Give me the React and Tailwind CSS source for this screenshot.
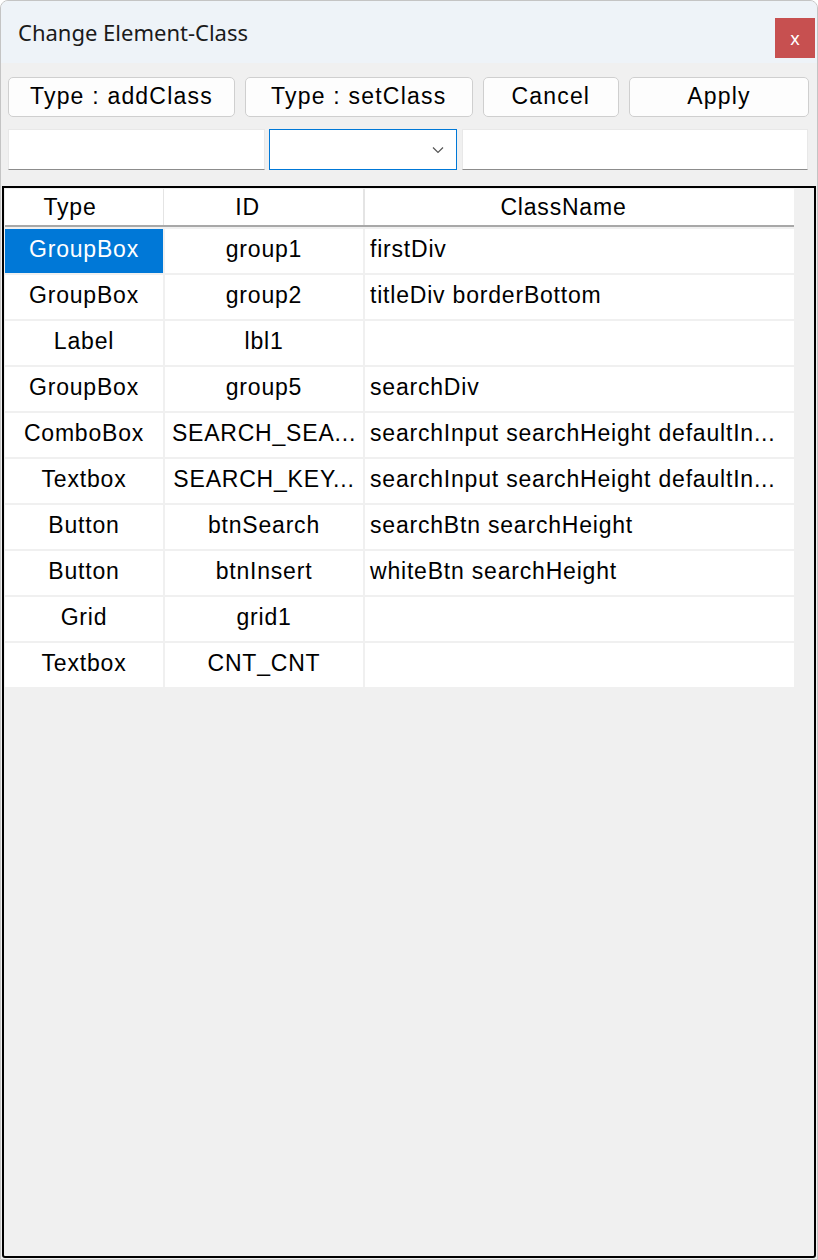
const rows = [
    { type: "GroupBox", id: "group1", cls: "firstDiv", selected: true },
    { type: "GroupBox", id: "group2", cls: "titleDiv borderBottom" },
    { type: "Label", id: "lbl1", cls: "" },
    { type: "GroupBox", id: "group5", cls: "searchDiv" },
    { type: "ComboBox", id: "SEARCH_SEA...", cls: "searchInput searchHeight defaultIn..." },
    { type: "Textbox", id: "SEARCH_KEY...", cls: "searchInput searchHeight defaultIn..." },
    { type: "Button", id: "btnSearch", cls: "searchBtn searchHeight" },
    { type: "Button", id: "btnInsert", cls: "whiteBtn searchHeight" },
    { type: "Grid", id: "grid1", cls: "" },
    { type: "Textbox", id: "CNT_CNT", cls: "" },
];

const gridFont = { fontFamily: '"Liberation Sans", Arial, sans-serif' };

function ToolButton({ label, className }) {
    return (
        <button
            className={`h-[40px] rounded-[5px] border border-[#cfcfcf] bg-[#fdfdfd] text-[23px] tracking-[1.2px] text-black leading-none pb-[2px] ${className}`}
            style={gridFont}
        >
            {label}
        </button>
    );
}

export default function App() {
    return (
        <div className="w-[818px] h-[1260px] bg-white">
            <div className="w-[818px] h-[1260px] flex flex-col bg-[#f0f0f0] border border-[#c4c4c4] rounded-t-[8px] overflow-hidden">
                {/* title bar */}
                <div className="h-[62px] shrink-0 bg-[#eef3f8] flex items-center justify-between pl-[17px] pr-[2px]">
                    <span
                        className="text-[22px] text-[#1a1a1a]"
                        style={{ fontFamily: '"Noto Sans", "Open Sans", sans-serif' }}
                    >
                        Change Element-Class
                    </span>
                    <button
                        className="w-[40px] h-[40px] bg-[#c75050] text-white text-[18px] leading-none flex items-center justify-center mt-[12px]"
                        style={{ fontFamily: '"Noto Sans", sans-serif' }}
                    >
                        x
                    </button>
                </div>

                {/* buttons */}
                <div className="flex gap-[10px] pl-[7px] pr-[8px] mt-[14px]">
                    <ToolButton label="Type : addClass" className="w-[228px]" />
                    <ToolButton label="Type : setClass" className="w-[229px]" />
                    <ToolButton label="Cancel" className="w-[137px]" />
                    <ToolButton label="Apply" className="w-[181px]" />
                </div>

                {/* inputs */}
                <div className="flex pl-[7px] mt-[12px] h-[41px]">
                    <div className="w-[257px] bg-white border border-[#e8e8e8] border-b-[#8c8c8c]" />
                    <div className="w-[188px] ml-[4px] bg-white border border-[#0078d7] flex items-center justify-end pr-[12px]">
                        <svg width="12" height="8" viewBox="0 0 12 8" fill="none">
                            <path d="M1 1.5 L6 6.5 L11 1.5" stroke="#555" strokeWidth="1.2" />
                        </svg>
                    </div>
                    <div className="w-[346px] ml-[5px] bg-white border border-[#e8e8e8] border-b-[#8c8c8c]" />
                </div>

                {/* grid */}
                <div className="mt-[16px] ml-[1px] mr-[1px] mb-[1px] flex-1 border-2 border-black rounded-b-[3px] bg-[#f0f0f0] pt-[1px] pl-[1px]">
                    <div className="w-[789px] flex flex-col gap-[2px] tracking-[0.8px]" style={gridFont}>
                        <div className="flex h-[38px] gap-[2px] bg-[#e4e4e4] border-b-2 border-[#a8a8a8] text-[23px] text-black">
                            <div className="w-[158px] bg-white flex items-center justify-center -mr-[1px] pr-[28px]">Type</div>
                            <div className="w-[199px] bg-white flex items-center justify-center pr-[32px]">ID</div>
                            <div className="flex-1 bg-white flex items-center justify-center pr-[32px]">ClassName</div>
                        </div>
                        {rows.map((r, i) => (
                            <div key={i} className="flex h-[44px] gap-[2px] text-[23px] text-black">
                                <div
                                    className={`w-[158px] flex items-center justify-center pb-[3px] ${
                                        r.selected ? "bg-[#0078d7] text-white" : "bg-white"
                                    }`}
                                >
                                    {r.type}
                                </div>
                                <div className="w-[198px] bg-white flex items-center justify-center whitespace-nowrap pb-[3px]">
                                    {r.id}
                                </div>
                                <div className="flex-1 bg-white flex items-center pl-[5px] whitespace-nowrap overflow-hidden pb-[3px]">
                                    {r.cls}
                                </div>
                            </div>
                        ))}
                    </div>
                </div>
            </div>
        </div>
    );
}
